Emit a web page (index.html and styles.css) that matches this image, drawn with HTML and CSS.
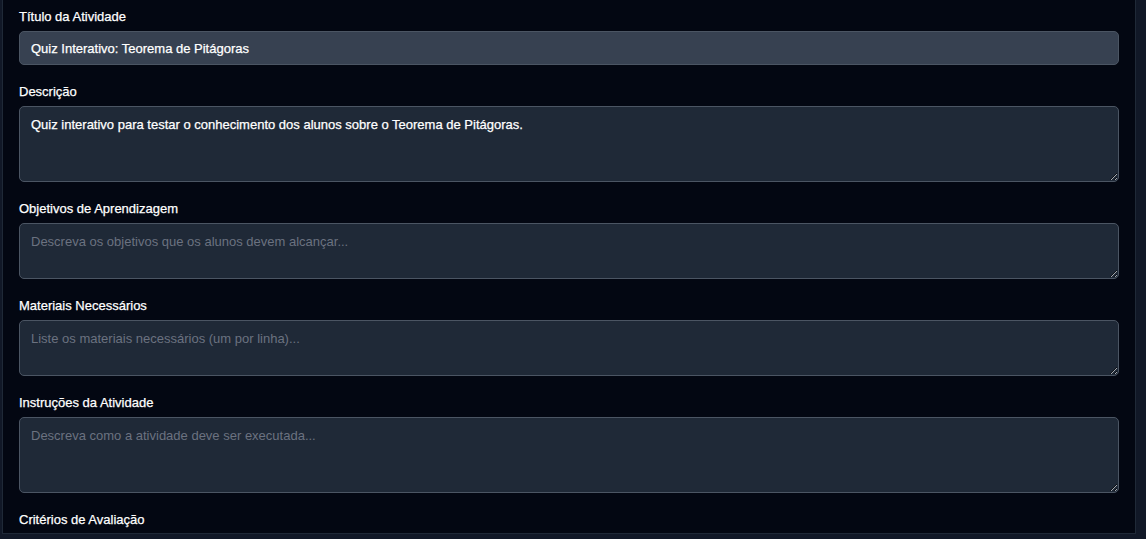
FILE: index.html
```html
<!DOCTYPE html>
<html lang="pt">
<head>
<meta charset="utf-8">
<title>Atividade</title>
<link rel="stylesheet" href="styles.css">
</head>
<body>
<div class="panel">
  <form class="form">
    <div class="group">
      <label class="label" for="titulo">Título da Atividade</label>
      <input id="titulo" class="input" type="text" value="Quiz Interativo: Teorema de Pitágoras">
    </div>
    <div class="group">
      <label class="label" for="desc">Descrição</label>
      <textarea id="desc" class="area area-lg">Quiz interativo para testar o conhecimento dos alunos sobre o Teorema de Pitágoras.</textarea>
    </div>
    <div class="group">
      <label class="label" for="obj">Objetivos de Aprendizagem</label>
      <textarea id="obj" class="area area-sm" placeholder="Descreva os objetivos que os alunos devem alcançar..."></textarea>
    </div>
    <div class="group">
      <label class="label" for="mat">Materiais Necessários</label>
      <textarea id="mat" class="area area-sm" placeholder="Liste os materiais necessários (um por linha)..."></textarea>
    </div>
    <div class="group">
      <label class="label" for="inst">Instruções da Atividade</label>
      <textarea id="inst" class="area area-lg" placeholder="Descreva como a atividade deve ser executada..."></textarea>
    </div>
    <div class="group">
      <label class="label" for="crit">Critérios de Avaliação</label>
    </div>
  </form>
</div>
</body>
</html>
```

FILE: styles.css
```css
html, body {
  margin: 0;
  padding: 0;
  background: #111827;
  height: 539px;
  overflow: hidden;
  font-family: "Liberation Sans", Arial, sans-serif;
  color-scheme: dark;
}

.panel {
  box-sizing: border-box;
  margin-left: 2px;
  width: 1134px;
  height: 534px;
  background: #030712;
  border: 1px solid #1f2937;
  border-top: none;
  padding: 7px 16px 0 16px;
  overflow: hidden;
}

.form {
  display: flex;
  flex-direction: column;
  gap: 17px;
}

.group {
  display: flex;
  flex-direction: column;
  gap: 4px;
}

.label {
  display: block;
  font-size: 13px;
  line-height: 20px;
  font-weight: 400;
  color: #ffffff;
  -webkit-text-stroke: 0.25px #ffffff;
}

.input,
.area {
  box-sizing: border-box;
  width: 100%;
  margin: 0;
  border: 1px solid #4b5563;
  border-radius: 5px;
  padding: 8px 11px;
  font-family: "Liberation Sans", Arial, sans-serif;
  font-size: 13px;
  line-height: 20px;
  font-weight: 400;
  color: #ffffff;
  -webkit-text-stroke: 0.25px #ffffff;
  outline: none;
}

.input {
  height: 34px;
  padding-top: 6px;
  padding-bottom: 6px;
  background: #374151;
}

.area {
  display: block;
  background: #1f2937;
  resize: vertical;
}

.area::placeholder {
  color: #6b7280;
  -webkit-text-stroke: 0;
}

.area-lg {
  height: 76px;
}

.area-sm {
  height: 56px;
}
```
